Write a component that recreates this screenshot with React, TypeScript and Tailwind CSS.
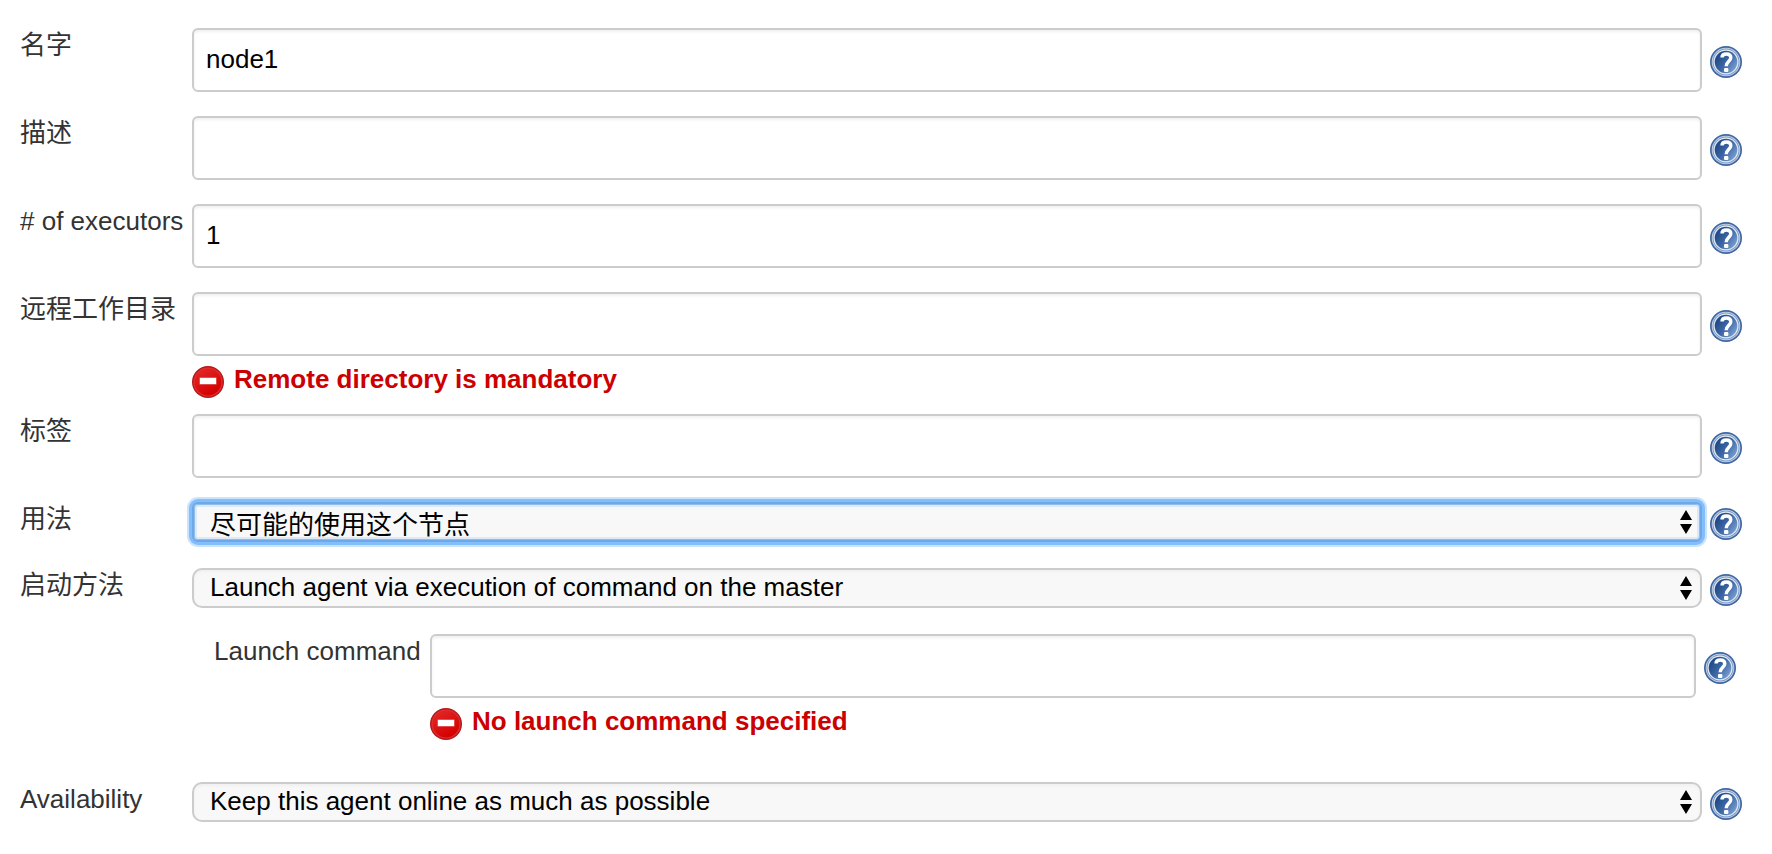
import { useId, useState } from "react";
import type { ReactNode } from "react";

const fieldClass =
  "block h-16 w-full rounded-[6px] border-2 border-[#ccc] bg-white px-3 pb-0.5 text-[26px] text-black shadow-[inset_0_2px_3px_#f0f0f0] outline-none";

function HelpIcon() {
  return (
    <svg viewBox="0 0 32 32" className="size-8" aria-hidden="true">
      <defs>
        <linearGradient id="help-fill" x1="0" y1="0.2" x2="1" y2="0.9">
          <stop offset="0.1" stopColor="#204a87" />
          <stop offset="0.5" stopColor="#3f69a6" />
          <stop offset="1" stopColor="#86aad8" />
        </linearGradient>
      </defs>
      <circle cx="16" cy="16" r="16" fill="#3f67a4" />
      <circle cx="16" cy="16" r="14.3" fill="#cfdaea" />
      <circle cx="16" cy="16" r="13.5" fill="#7d9ac6" />
      <circle cx="16" cy="16" r="12.5" fill="#e6ecf5" />
      <circle cx="16" cy="16" r="11.3" fill="url(#help-fill)" />
      <path
        d="M12 11.6C12 8.8 14 8 16.4 8C19 8 20.8 9.3 20.8 11.8C20.8 15.2 16.2 15.4 16.2 20.2"
        fill="none"
        stroke="#fff"
        strokeWidth="3.4"
      />
      <rect x="14" y="22" width="4.4" height="4" rx="1" fill="#fff" />
    </svg>
  );
}

function ErrorIcon() {
  return (
    <svg viewBox="0 0 32 32" className="size-8 shrink-0" aria-hidden="true">
      <defs>
        <linearGradient id="error-fill" x1="0" y1="0" x2="0.6" y2="1">
          <stop offset="0" stopColor="#e42a2a" />
          <stop offset="1" stopColor="#d40000" />
        </linearGradient>
      </defs>
      <circle cx="16" cy="16" r="16" fill="#b41818" />
      <circle cx="16" cy="16" r="14.6" fill="#e03030" />
      <circle cx="16" cy="16" r="13.4" fill="url(#error-fill)" />
      <rect x="7.5" y="11.5" width="17" height="7" fill="#ee8a8a" />
      <rect x="8" y="12" width="16" height="6" fill="#fff" />
    </svg>
  );
}

function Row({
  id,
  label,
  error,
  labelWidth = "w-[172px]",
  iconOffset = "mt-[18px]",
  className,
  children,
}: {
  id: string;
  label: string;
  error?: string;
  labelWidth?: string;
  iconOffset?: string;
  className: string;
  children: ReactNode;
}) {
  return (
    <div className={`flex items-start ${className}`}>
      <label htmlFor={id} className={`shrink-0 whitespace-nowrap leading-[34px] ${labelWidth}`}>
        {label}
      </label>
      <div className="min-w-0 flex-1">
        {children}
        {error && (
          <div className="mt-2.5 flex items-start gap-2.5 font-bold leading-[26px] text-[#c00]">
            <ErrorIcon />
            <span>{error}</span>
          </div>
        )}
      </div>
      <button type="button" aria-label={`Help: ${label}`} className={`ml-2 shrink-0 ${iconOffset}`}>
        <HelpIcon />
      </button>
    </div>
  );
}

function TextRow({
  initial = "",
  ...row
}: {
  initial?: string;
  label: string;
  error?: string;
  labelWidth?: string;
  className: string;
}) {
  const id = useId();
  const [value, setValue] = useState(initial);
  return (
    <Row id={id} {...row}>
      <input id={id} type="text" value={value} onChange={(e) => setValue(e.target.value)} className={fieldClass} />
    </Row>
  );
}

function SelectRow({
  option,
  active = false,
  ...row
}: {
  option: string;
  active?: boolean;
  label: string;
  className: string;
}) {
  const id = useId();
  return (
    <Row id={id} iconOffset="mt-1.5" {...row}>
      <div className="relative">
        <select
          id={id}
          className={`block h-10 w-full appearance-none border-2 bg-[#f8f8f8] px-4 text-[26px] text-black outline-none ${
            active
              ? "rounded-[6px] border-[#6ea8e6] pt-0.5 shadow-[0_0_0_3px_#83bdfc,0_0_0_5px_#cbe4fd,inset_0_0_0_1px_#8fbdee,inset_0_0_0_3px_#dce9f8]"
              : "rounded-[10px] border-[#ccc] pb-0.5 leading-[34px] shadow-[inset_0_2px_3px_#f0f0f0]"
          }`}
        >
          <option>{option}</option>
        </select>
        <svg
          viewBox="0 0 12 24"
          className="pointer-events-none absolute right-2.5 top-2 h-6 w-3"
          aria-hidden="true"
        >
          <path d="M6 0L12 10H0ZM0 14H12L6 24Z" fill="#000" />
        </svg>
      </div>
    </Row>
  );
}

export default function App() {
  return (
    <form
      className="min-h-screen bg-white pl-5 pr-[30px] pt-7 font-['Liberation_Sans','Noto_Sans_CJK_SC',sans-serif] text-[26px] text-[#333]"
      onSubmit={(e) => e.preventDefault()}
    >
      <TextRow label="名字" initial="node1" className="pb-6" />
      <TextRow label="描述" className="pb-6" />
      <TextRow label="# of executors" initial="1" className="pb-6" />
      <TextRow label="远程工作目录" error="Remote directory is mandatory" className="pb-4" />
      <TextRow label="标签" className="pb-6" />
      <SelectRow label="用法" option="尽可能的使用这个节点" active className="pb-[26px]" />
      <SelectRow
        label="启动方法"
        option="Launch agent via execution of command on the master"
        className="pb-[26px]"
      />
      <TextRow
        label="Launch command"
        error="No launch command specified"
        labelWidth="w-[216px]"
        className="pb-[42px] pl-[194px] pr-1.5"
      />
      <SelectRow label="Availability" option="Keep this agent online as much as possible" className="pb-6" />
    </form>
  );
}
